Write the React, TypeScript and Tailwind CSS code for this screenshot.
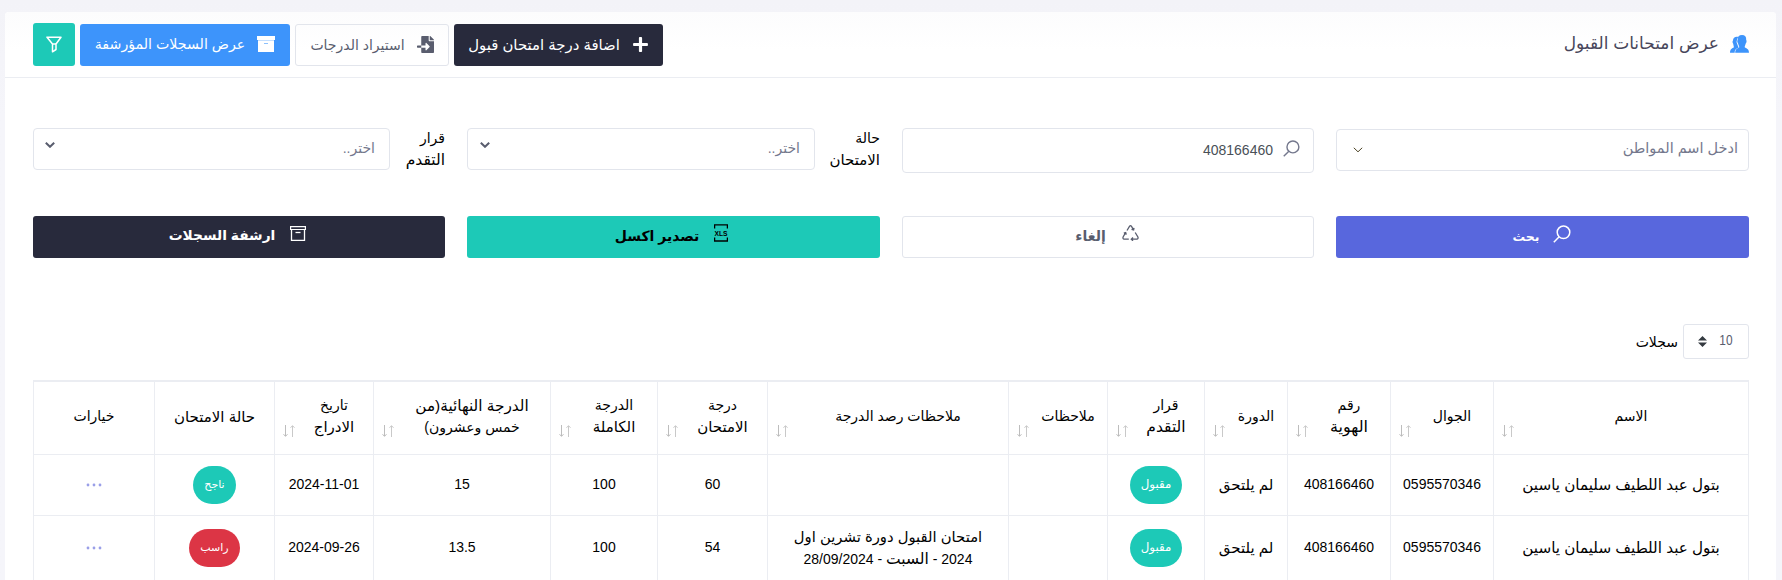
import { ReactNode } from "react";
import { FaFileImport, FaPlus } from "react-icons/fa";

type IconProps = { className?: string };

const GroupIcon = ({ className }: IconProps) => (
  <svg viewBox="0 0 19 18" className={className} fill="currentColor">
    <path d="M8.500 2.200C6 1.200 2.800 2.500 3 5.600C2.200 6.200 2.500 8 3.200 8.800C3.500 10.800 4 11.400 3.800 12.400C2.400 13.200 0 13.600 0 17.800H4.700C4.700 14.600 6 14 8.400 12.800C8.600 11.600 7.500 10.500 7.200 8.800C6.500 7.800 6.400 6.400 6.900 5.600C6.900 3.800 7.500 2.900 8.500 2.200Z" />
    <path d="M12 0C14.900 0 16.500 1.800 16.200 5C16.900 5.600 16.600 7.700 15.700 8.400C15.300 10.400 14.600 11 14.700 12.200C16.300 13.300 19 13.600 19 17.800H5.200C5.200 13.700 7.700 13.500 9.300 12.200C9.400 11 8.500 10.400 8.100 8.400C7.200 7.700 7 5.800 7.600 5.100C7.300 1.800 9 0 12 0Z" />
  </svg>
);

const FunnelIcon = ({ className }: IconProps) => (
  <svg viewBox="0 0 16 17" className={className} fill="none" stroke="currentColor" strokeWidth="1.500" strokeLinejoin="round">
    <path d="M1 1.200H15L10 8V13.500L6.500 15.800V8Z" />
    <path d="M6.500 8H10" />
  </svg>
);

const ArchiveSolidIcon = ({ className }: IconProps) => (
  <svg viewBox="0 0 18 16" className={className} fill="currentColor">
    <rect x="0" y="0" width="18" height="4" />
    <rect x="1" y="4" width="16" height="1" opacity="0.7" />
    <path d="M1 5H17V16H1Z" />
    <rect x="7" y="7" width="4" height="1" fill="#8cc0fc" />
  </svg>
);

const ArchiveLineIcon = ({ className }: IconProps) => (
  <svg viewBox="0 0 16 15" className={className} fill="none" stroke="currentColor">
    <path d="M0.600 0.600H15.400V3.500H0.600Z" strokeWidth="1.200" />
    <path d="M1.500 3.500V14.300H14.500V3.500" strokeWidth="1.300" />
    <path d="M5.500 6.500H10.500" strokeWidth="1.300" />
  </svg>
);

const LoupeIcon = ({ className }: IconProps) => (
  <svg viewBox="0 0 18 18" className={className} fill="none" stroke="currentColor" strokeWidth="1.500">
    <circle cx="10.500" cy="7.300" r="6.300" />
    <path d="M6.200 11.800L0.800 17.200" />
  </svg>
);

const RecycleIcon = ({ className }: IconProps) => (
  <svg viewBox="0 0 17 16" className={className} fill="none" stroke="currentColor" strokeWidth="1.300">
    <path d="M5 5.500L7.600 1.200Q8.500 0.200 9.400 1.200L11.500 4.800M12 2.800L11.600 5L9.500 4.400" />
    <path d="M13.200 7.500L15.900 12Q16.500 13.800 14.800 14.200H9.500M11 12.500L9.300 14.200L11 15.800" />
    <path d="M6.800 14.200H2.200Q0.500 13.800 1.100 12L3.600 7.700M1.800 8.200L3.700 7.500L4.300 9.600" />
  </svg>
);

const XlsIcon = ({ className }: IconProps) => (
  <svg viewBox="0 0 14 18" className={className} fill="none" stroke="currentColor" strokeWidth="1.300">
    <path d="M0.600 4.500V0.800H13.400V4.500M0.600 13.500V17H13.400V13.500" />
    <text x="7" y="11.600" textAnchor="middle" fontSize="6.700" fontWeight="700" fill="currentColor" stroke="none" direction="ltr">XLS</text>
  </svg>
);

const Chevron = ({ className }: IconProps) => (
  <svg viewBox="0 0 10 6" className={className} fill="none" stroke="currentColor">
    <path d="M0.800 0.800L5 4.800L9.200 0.800" />
  </svg>
);

const SortArrows = () => (
  <svg viewBox="0 0 13 12" className="absolute bottom-[17px] left-2 h-3 w-[13px]" fill="none">
    <path d="M2.500 0V11M0.500 9.200L2.500 11.400L4.500 9.200" stroke="#bdbdbd" />
    <path d="M9.500 12V1M7.500 2.800L9.500 0.600L11.500 2.800" stroke="#c9c9c9" />
  </svg>
);

type Column = { label: ReactNode; width: string; sortable: boolean };

const columns: Column[] = [
  { label: "الاسم", width: "w-[256px]", sortable: true },
  { label: "الجوال", width: "w-[103px]", sortable: true },
  { label: <>رقم<br /><span className="text-[16px]">الهوية</span></>, width: "w-[103px]", sortable: true },
  { label: "الدورة", width: "w-[83px]", sortable: true },
  { label: <>قرار<br /><span className="text-[15.500px]">التقدم</span></>, width: "w-[97px]", sortable: true },
  { label: "ملاحظات", width: "w-[99px]", sortable: true },
  { label: "ملاحظات رصد الدرجة", width: "w-[241px]", sortable: true },
  { label: <>درجة<br /><span className="text-[15px]">الامتحان</span></>, width: "w-[110px]", sortable: true },
  { label: <>الدرجة<br /><span className="text-[15px]">الكاملة</span></>, width: "w-[107px]", sortable: true },
  { label: <><span className="text-[15.300px]">الدرجة النهائية(من</span><br />خمس وعشرون)</>, width: "w-[177px]", sortable: true },
  { label: <>تاريخ<br /><span className="text-[15px]">الادراج</span></>, width: "w-[99px]", sortable: true },
  { label: <span className="text-[15px]">حالة الامتحان</span>, width: "w-[120px]", sortable: false },
  { label: "خيارات", width: "w-[121px]", sortable: false },
];

const Badge = ({ tone, children }: { tone: "green" | "red"; children: string }) => (
  <span
    className={`inline-flex h-[38px] items-center rounded-[19px] px-[11px] pb-0.5 align-middle text-white ${
      tone === "green" ? "bg-[#1dc9b7]" : "bg-[#dc3545]"
    } ${children === "مقبول" ? "text-[11.800px]" : "text-[11px]"}`}
  >
    {children}
  </span>
);

const Dots = () => (
  <svg viewBox="0 0 16 4" className="mx-auto h-1 w-4 fill-[#9a9fe8]">
    <circle cx="2" cy="2" r="1.400" />
    <circle cx="8" cy="2" r="1.400" />
    <circle cx="14" cy="2" r="1.400" />
  </svg>
);

const name = <span className="text-[15.200px]">بتول عبد اللطيف سليمان ياسين</span>;
const notJoined = <span className="text-[15px]">لم يلتحق</span>;

const rows: ReactNode[][] = [
  [name, "0595570346", "408166460", notJoined, <Badge tone="green">مقبول</Badge>, "", "", "60", "100", "15", "2024-11-01", <Badge tone="green">ناجح</Badge>, <Dots />],
  [
    name, "0595570346", "408166460", notJoined, <Badge tone="green">مقبول</Badge>, "",
    <><span className="text-[14.800px]">امتحان القبول دورة تشرين اول</span><br />2024 - <span className="text-[15.500px]">السبت</span> - 28/09/2024</>,
    "54", "100", "13.5", "2024-09-26", <Badge tone="red">راسب</Badge>, <Dots />,
  ],
];

export default function App() {
  return (
    <div dir="rtl" className="h-[580px] w-[1782px] overflow-hidden bg-[#f5f5fa] bg-linear-to-b from-[#f3f3f8] to-[#f5f5fa] to-20% pt-3 pr-1.5 pl-[5px] font-['Liberation_Sans','DejaVu_Sans',sans-serif] text-[14px] text-black">
      <main className="h-[600px] rounded bg-white">
        <header className="flex h-[66px] items-center justify-between rounded-t border-b border-[#ebedf2] bg-linear-to-b from-[#fcfcfd] to-white to-60% pr-[27px] pl-7">
          <h1 className="flex items-center gap-[11px] pb-0.5 text-[17px] text-[#48465b]">
            <GroupIcon className="h-[18px] w-[19px] text-[#3d94fb]" />
            <span>عرض امتحانات القبول</span>
          </h1>
          <div className="flex items-end gap-[5px]">
            <button className="flex h-[42px] w-[209px] items-center justify-center gap-3 rounded-[3px] bg-[#282a3c] text-white">
              <FaPlus className="mb-0.5 size-[17px]" />
              <span className="text-[14.900px]">اضافة درجة امتحان قبول</span>
            </button>
            <button className="flex h-[42px] w-[154px] items-center justify-center gap-3 rounded-[3px] border border-[#e2e5ec] text-[#595d6e]">
              <FaFileImport className="mb-0.5 size-[17px]" />
              <span>استيراد الدرجات</span>
            </button>
            <button className="flex h-[42px] w-[210px] items-center justify-center gap-3 rounded-[3px] bg-[#3d94fb] text-white">
              <ArchiveSolidIcon className="mb-0.5 h-4 w-[18px]" />
              <span className="text-[14.200px]">عرض السجلات المؤرشفة</span>
            </button>
            <button className="flex h-[43px] w-[42px] items-center justify-center rounded-[3px] bg-[#1dc9b7] text-white">
              <FunnelIcon className="h-[17px] w-4" />
            </button>
          </div>
        </header>

        <section className="pt-[50px] pr-[27px] pl-7">
          <div className="grid h-[45px] grid-cols-[413px_412px_413px_412px] items-start gap-[22px]">
            <div className="mt-px flex h-[42px] items-center justify-between rounded border border-[#e2e5ec] pr-2.5 pb-0.5 pl-4 text-[#74788d]">
              <span className="text-[14.500px]">ادخل اسم المواطن</span>
              <Chevron className="mt-0.5 h-1.5 w-2.5 text-[#4d4426]" />
            </div>
            <div className="flex h-[45px] items-center gap-2.5 rounded border border-[#e2e5ec] pr-[13px] text-[#495057]">
              <LoupeIcon className="mb-1 size-[17px] text-[#74788d]" />
              <span>408166460</span>
            </div>
            <div className="flex justify-between">
              <label className="leading-[21px]">حالة<br /><span className="text-[15px]">الامتحان</span></label>
              <div className="flex h-[42px] w-[348px] items-center justify-between rounded border border-[#e2e5ec] pr-3.5 pb-px pl-3 text-[#74788d]">
                <span>اختر..</span>
                <Chevron className="mb-[7px] h-1.5 w-2.5 stroke-2 text-[#595d6e]" />
              </div>
            </div>
            <div className="flex justify-between">
              <label className="leading-[21px]">قرار<br /><span className="text-[15.500px]">التقدم</span></label>
              <div className="flex h-[42px] w-[357px] items-center justify-between rounded border border-[#e2e5ec] pr-3.5 pb-px pl-[11px] text-[#74788d]">
                <span>اختر..</span>
                <Chevron className="mb-[7px] h-1.5 w-2.5 stroke-2 text-[#595d6e]" />
              </div>
            </div>
          </div>

          <div className="mt-[43px] grid grid-cols-[413px_412px_413px_412px] gap-[22px] font-bold">
            <button className="flex h-[42px] items-center justify-center gap-[14px] rounded-[3px] bg-[#5867dd] pr-px text-white">
              <LoupeIcon className="mb-1.5 size-[18px]" />
              <span className="text-[12.500px]">بحث</span>
            </button>
            <button className="flex h-[42px] items-center justify-center gap-4 rounded-[3px] border border-[#e2e5ec] pr-0.5 pb-0.5 text-[#595d6e]">
              <RecycleIcon className="mb-1.5 h-4 w-[17px]" />
              <span>إلغاء</span>
            </button>
            <button className="flex h-[42px] items-center justify-center gap-[15px] rounded-[3px] bg-[#1dc9b7] pr-1 pb-0.5 text-black">
              <XlsIcon className="mb-1.5 h-[18px] w-3.5" />
              <span>تصدير اكسل</span>
            </button>
            <button className="flex h-[42px] items-center justify-center gap-[15px] rounded-[3px] bg-[#282a3c] pr-[3px] pb-0.5 text-white">
              <ArchiveLineIcon className="mb-1.5 h-[15px] w-4" />
              <span className="text-[13.800px]">ارشفة السجلات</span>
            </button>
          </div>

          <div className="mt-[66px] flex items-center gap-[5px]">
            <div className="flex h-[35px] w-[66px] items-center gap-[13px] rounded-[3px] border border-[#e2e5ec] pr-[15px] text-[#595d6e]">
              <span className="inline-block w-[13px] pb-0.5">
                <span className="inline-block origin-right scale-x-85">10</span>
              </span>
              <svg viewBox="0 0 9 11" className="h-[11px] w-[9px] fill-[#343a40]">
                <path d="M4.500 0L9 4.500H0ZM0 6.500H9L4.500 11Z" />
              </svg>
            </div>
            <span className="pt-0.5">سجلات</span>
          </div>

          <table className="mt-[21px] w-[1716px] table-fixed border-separate border-spacing-0 text-center">
            <thead>
              <tr>
                {columns.map((c, i) => (
                  <th
                    key={i}
                    className={`relative h-[75px] border-t-2 border-b border-l border-[#ebedf2] p-0 pb-[3px] leading-[21px] font-normal first:border-r ${c.width} ${
                      c.sortable ? "pr-2.5 pl-[30px]" : ""
                    }`}
                  >
                    <div className="-mx-5 whitespace-nowrap">{c.label}</div>
                    {c.sortable && <SortArrows />}
                  </th>
                ))}
              </tr>
            </thead>
            <tbody>
              {rows.map((r, i) => (
                <tr key={i}>
                  {r.map((cell, j) => (
                    <td
                      key={j}
                      className={`border-b border-l border-[#ebedf2] p-0 leading-[22px] whitespace-nowrap first:border-r ${
                        i === 0 ? "h-[61px]" : "h-[65px]"
                      } ${typeof cell === "string" ? "pb-0.5" : "pb-px"}`}
                    >
                      {cell}
                    </td>
                  ))}
                </tr>
              ))}
            </tbody>
          </table>
        </section>
      </main>
    </div>
  );
}
